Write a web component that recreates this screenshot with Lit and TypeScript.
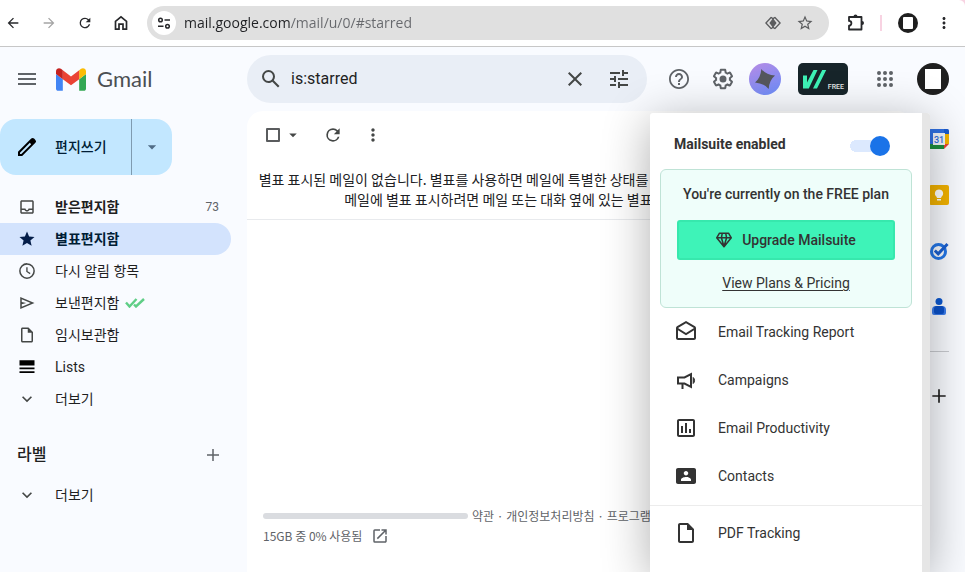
import { LitElement, html, css, nothing, TemplateResult } from "lit";
import { customElement, state } from "lit/decorators.js";
import { classMap } from "lit/directives/class-map.js";

const P = {
  back: "M20 11H7.83l5.59-5.59L12 4l-8 8 8 8 1.41-1.41L7.83 13H20v-2z",
  forward: "M12 4l-1.41 1.41L16.17 11H4v2h12.17l-5.58 5.59L12 20l8-8z",
  refresh: "M17.65 6.35A7.96 7.96 0 0 0 12 4a8 8 0 1 0 7.73 10h-2.08A6 6 0 1 1 12 6c1.66 0 3.14.69 4.22 1.78L13 11h7V4l-2.35 2.35z",
  more: "M12 8c1.1 0 2-.9 2-2s-.9-2-2-2-2 .9-2 2 .9 2 2 2zm0 2c-1.1 0-2 .9-2 2s.9 2 2 2 2-.9 2-2-.9-2-2-2zm0 6c-1.1 0-2 .9-2 2s.9 2 2 2 2-.9 2-2-.9-2-2-2z",
  starOutline: "M22 9.24l-7.19-.62L12 2 9.19 8.63 2 9.24l5.46 4.73L5.82 21 12 17.27 18.18 21l-1.63-7.03L22 9.24zM12 15.4l-3.76 2.27 1-4.28-3.32-2.88 4.38-.38L12 6.1l1.71 4.04 4.38.38-3.32 2.88 1 4.28L12 15.4z",
  menu: "M3 18h18v-2H3v2zm0-5h18v-2H3v2zm0-7v2h18V6H3z",
  search: "M20.49 19l-5.73-5.73A6.97 6.97 0 0 0 16 9.5 6.5 6.5 0 1 0 9.5 16c1.41 0 2.72-.45 3.78-1.22L19 20.49 20.49 19zM5 9.5C5 7.01 7.01 5 9.5 5S14 7.01 14 9.5 11.99 14 9.5 14 5 11.99 5 9.5z",
  close: "M19 6.41L17.59 5 12 10.59 6.41 5 5 6.41 10.59 12 5 17.59 6.41 19 12 13.41 17.59 19 19 17.59 13.41 12z",
  tune: "M3 17v2h6v-2H3zM3 5v2h10V5H3zm10 16v-2h8v-2h-8v-2h-2v6h2zM7 9v2H3v2h4v2h2V9H7zm14 4v-2H11v2h10zm-6-4h2V7h4V5h-4V3h-2v6z",
  help: "M11 18h2v-2h-2v2zm1-16C6.48 2 2 6.48 2 12s4.48 10 10 10 10-4.48 10-10S17.52 2 12 2zm0 18.200c-4.500 0-8.200-3.700-8.200-8.200S7.500 3.800 12 3.800s8.200 3.700 8.200 8.200-3.700 8.200-8.200 8.200zM12 6c-2.210 0-4 1.790-4 4h2c0-1.100.9-2 2-2s2 .9 2 2c0 2-3 1.750-3 5h2c0-2.250 3-2.500 3-5 0-2.210-1.790-4-4-4z",
  gear: "M13.850 22.250h-3.700c-.740 0-1.360-.540-1.450-1.270l-.270-1.890c-.270-.140-.530-.290-.790-.460l-1.800.720c-.700.260-1.470-.030-1.810-.650L2.200 15.530c-.350-.660-.200-1.440.360-1.880l1.530-1.190c-.010-.150-.020-.300-.020-.460 0-.150.010-.310.020-.460l-1.520-1.190c-.590-.450-.740-1.260-.370-1.880l1.850-3.190c.340-.620 1.110-.900 1.790-.630l1.810.730c.260-.170.520-.320.780-.460l.270-1.910c.090-.700.710-1.250 1.440-1.250h3.700c.740 0 1.360.540 1.450 1.270l.270 1.890c.270.140.530.290.790.460l1.800-.720c.710-.260 1.480.030 1.820.650l1.840 3.180c.360.660.200 1.440-.360 1.880l-1.520 1.190c.010.150.020.300.020.460s-.010.310-.020.460l1.520 1.190c.560.450.720 1.230.370 1.860l-1.860 3.220c-.340.620-1.110.900-1.800.630l-1.800-.720c-.260.170-.520.320-.780.460l-.270 1.910c-.100.680-.720 1.220-1.460 1.220zm-3.230-2h2.760l.370-2.550.530-.220c.440-.180.880-.440 1.340-.780l.450-.340 2.380.960 1.380-2.400-2.030-1.580.070-.560c.030-.260.060-.510.060-.780s-.030-.530-.060-.780l-.070-.560 2.030-1.580-1.390-2.400-2.390.960-.450-.350c-.420-.320-.870-.580-1.330-.770l-.520-.220-.370-2.550h-2.760l-.370 2.550-.530.210c-.440.190-.880.440-1.340.790l-.450.330-2.380-.950-1.390 2.390 2.030 1.580-.070.560a7 7 0 0 0-.060.790c0 .260.020.530.060.780l.070.560-2.030 1.580 1.380 2.400 2.390-.960.450.350c.430.330.860.580 1.330.770l.530.220.380 2.550zM12 8.500a3.500 3.500 0 1 0 0 7 3.500 3.500 0 0 0 0-7z",
  apps: "M6 8a2 2 0 1 0 0-4 2 2 0 0 0 0 4zm6 12a2 2 0 1 0 0-4 2 2 0 0 0 0 4zm-6 0a2 2 0 1 0 0-4 2 2 0 0 0 0 4zm0-6a2 2 0 1 0 0-4 2 2 0 0 0 0 4zm6 0a2 2 0 1 0 0-4 2 2 0 0 0 0 4zm4-8a2 2 0 1 0 4 0 2 2 0 0 0-4 0zm-4 2a2 2 0 1 0 0-4 2 2 0 0 0 0 4zm6 6a2 2 0 1 0 0-4 2 2 0 0 0 0 4zm0 6a2 2 0 1 0 0-4 2 2 0 0 0 0 4z",
  pencil: "M20.41 4.94l-1.35-1.35a2 2 0 0 0-2.83 0L3 16.82V21h4.18L20.41 7.77a2 2 0 0 0 0-2.83zM6.350 19H5v-1.350l9.820-9.820 1.350 1.350L6.350 19z",
  drop: "M7 10l5 5 5-5z",
  inbox: "M19 3H5c-1.100 0-2 .900-2 2v14c0 1.100.900 2 2 2h14c1.100 0 2-.900 2-2V5c0-1.100-.900-2-2-2zm0 16H5v-3h3.560c.690 1.190 1.970 2 3.450 2s2.750-.810 3.450-2H19v3zm0-5h-4.990c0 1.100-.900 2-2 2s-2-.900-2-2H5V5h14v9z",
  star: "M12 17.270L18.180 21l-1.640-7.030L22 9.240l-7.190-.610L12 2 9.190 8.630 2 9.240l5.460 4.730L5.820 21z",
  clock: "M12 1.500a10.500 10.500 0 1 0 0 21 10.500 10.500 0 0 0 0-21zm0 19a8.500 8.500 0 1 1 0-17 8.500 8.500 0 0 1 0 17zM12.800 7H11v6l4.800 3.200.9-1.500-3.900-2.500z",
  send: "M3 4v16l19-8L3 4zm2 3l11.850 5L5 17v-3.500l6-1.500-6-1.500V7z",
  file: "M14 2H6c-1.100 0-2 .900-2 2v16c0 1.100.900 2 2 2h12c1.100 0 2-.900 2-2V8l-6-6zM6 20V4h7v5h5v11H6z",
  lists: "M2 3h20v7H2zm0 9.500h20V15H2zm0 5h20V20H2z",
  chevron: "M7.410 8.590L12 13.170l4.590-4.580L18 10l-6 6-6-6z",
  plus: "M20 13h-7v7h-2v-7H4v-2h7V4h2v7h7v2z",
  open: "M19 19H5V5h7V3H5a2 2 0 0 0-2 2v14a2 2 0 0 0 2 2h14c1.100 0 2-.900 2-2v-7h-2v7zM14 3v2h3.590l-9.830 9.830 1.410 1.410L19 6.410V10h2V3h-7z",
  mail: "M21.990 8c0-.720-.370-1.350-.940-1.700L12 1 2.950 6.300C2.380 6.650 2 7.280 2 8v10c0 1.100.900 2 2 2h16c1.100 0 2-.900 2-2l-.010-10zM20 8v.010L12 13 4 8l8-4.680L20 8zM4 18v-7.660l8 5.020 8-5.010V18H4z",
  chart: "M19 3H5c-1.100 0-2 .900-2 2v14c0 1.100.900 2 2 2h14c1.100 0 2-.900 2-2V5c0-1.100-.900-2-2-2zm0 16H5V5h14v14zM7 10h2v7H7zm4-3h2v10h-2zm4 6h2v4h-2z",
  contacts: "M20 4H4c-1.110 0-2 .900-2 2v12c0 1.100.890 2 2 2h16c1.100 0 2-.900 2-2V6c0-1.100-.900-2-2-2zm-8 3c1.240 0 2.250 1.010 2.250 2.250S13.240 11.500 12 11.500 9.750 10.490 9.750 9.250 10.760 7 12 7zm5 10H7v-1.500c0-1.660 3.340-2.500 5-2.500s5 .840 5 2.500V17z",
};

const icon = (d: string, size = 20) => html`
  <svg viewBox="0 0 24 24" width=${size} height=${size} fill="currentColor" aria-hidden="true"><path d=${d}></path></svg>`;

const base = css`
  * { box-sizing: border-box; }
  svg { display: block; flex: none; }
  button, input { font: inherit; color: inherit; margin: 0; padding: 0; border: 0; background: none; }
  button { display: flex; align-items: center; justify-content: center; flex: none; cursor: pointer; }
  a { color: inherit; text-decoration: none; }
  ul { list-style: none; margin: 0; padding: 0; }
`;

@customElement("browser-bar")
class BrowserBar extends LitElement {
  static styles = [base, css`
    :host { display: block; background: #f8d3e2; }
    .bar {
      display: flex; align-items: center; height: 47px; padding: 0 12px 0 5px;
      background: #fff; border-bottom: 1px solid #c7c7c7; border-top-right-radius: 6px; color: #27282b;
    }
    .nav { display: flex; gap: 20px; }
    .dim { color: #a5a5a5; }
    .address {
      flex: 1; display: flex; align-items: center; height: 34px; margin-left: 18px; padding: 0 15px 0 5px;
      border-radius: 17px; background: #e0e0e0; color: #5b5c5e;
    }
    .site { width: 24px; height: 24px; border-radius: 50%; background: #fff; color: #27282b; }
    .url {
      flex: 1; min-width: 0; height: 24px; margin-left: 8px; outline: 0;
      font: 14px/24px "Open Sans", "Noto Sans", sans-serif;
      background: linear-gradient(90deg, #202124 107px, #66686c 107px); background-clip: text; -webkit-background-clip: text;
      color: transparent;
    }
    .acts { display: flex; align-items: center; gap: 15px; }
    .tools { display: flex; align-items: center; margin-left: 17px; }
    .sep { width: 2px; height: 16px; margin: 0 16px; background: #f8d3e2; }
    .avatar { width: 20px; height: 20px; border-radius: 50%; background: #1f1f1f; margin-right: 17px; }
    .avatar::before { content: ""; width: 10px; height: 12px; background: #fff; border-radius: 1px; }
  `];

  render() {
    return html`
      <div class="bar">
        <div class="nav">
          <button aria-label="뒤로">${icon(P.back, 16)}</button>
          <button class="dim" aria-label="앞으로">${icon(P.forward, 16)}</button>
          <button aria-label="새로고침">${icon(P.refresh, 16)}</button>
          <button aria-label="홈">
            <svg width="16" height="16" viewBox="0 0 16 16" fill="none" stroke="currentColor" stroke-width="1.700"><path d="M2.500 14.200V6.300L8 1.900l5.500 4.400v7.900H10V9.200H6v5z"></path></svg>
          </button>
        </div>
        <div class="address">
          <button class="site" aria-label="사이트 정보">
            <svg width="14" height="14" viewBox="0 0 14 14" fill="none" stroke="currentColor" stroke-width="1.500"><circle cx="3.500" cy="4" r="1.800"></circle><path d="M7.500 4H13M1 10.200h5.500"></path><circle cx="10.500" cy="10.200" r="1.800"></circle></svg>
          </button>
          <input class="url" aria-label="주소" value="mail.google.com/mail/u/0/#starred" />
          <div class="acts">
            <button aria-label="미리보기">
              <svg width="16" height="16" viewBox="0 0 16 16" fill="none" stroke="currentColor" stroke-width="1.300"><path d="M6.300 2.200L.9 8l5.400 5.800M9.700 2.200L15.100 8l-5.400 5.800M6.300 2.200l1.700 1.700 1.700-1.700M6.300 13.800L8 12.100l1.700 1.700"></path><path d="M8 4.300L10.800 8 8 11.700 5.200 8z" fill="currentColor"></path></svg>
            </button>
            <button aria-label="북마크">${icon(P.starOutline, 18)}</button>
          </div>
        </div>
        <div class="tools">
          <button aria-label="확장 프로그램">
            <svg width="18" height="18" viewBox="0 0 18 18" fill="none" stroke="currentColor" stroke-width="1.800" stroke-linejoin="round"><path d="M3 3h12.500v12.500H3v-3.800a2.400 2.400 0 0 0 0-4.800z"></path><path d="M7.500 2.500a2 2 0 0 1 4 0zM16 7a2 2 0 0 1 0 4z" fill="currentColor" stroke="none"></path></svg>
          </button>
          <span class="sep"></span>
          <button class="avatar" aria-label="프로필"></button>
          <button aria-label="메뉴">${icon(P.more, 18)}</button>
        </div>
      </div>`;
  }
}

@customElement("mail-header")
class MailHeader extends LitElement {
  static styles = [base, css`
    :host { display: flex; align-items: center; height: 64px; padding-right: 16px; color: #5f6368; }
    .brand { display: flex; align-items: center; width: 247px; flex: none; padding-left: 15px; }
    .logo { display: flex; align-items: center; gap: 11px; margin-left: 17px; color: #4c4f53; font: 22px/28px Lato, "Open Sans", sans-serif; }
    .search {
      flex: 1; min-width: 0; display: flex; align-items: center; height: 48px; padding: 0 16px 0 12px;
      border-radius: 24px; background: #e9eef6; color: #444746;
    }
    .search input { flex: 1; min-width: 0; margin-left: 8px; outline: 0; font: 16px/24px Roboto, sans-serif; color: #1f1f1f; }
    .tune { margin-left: 20px; }
    .round { width: 40px; height: 40px; }
    .icons { display: flex; align-items: center; margin-left: 12px; gap: 4px; }
    .gemini { width: 32px; height: 32px; border-radius: 50%; margin-left: 2px; background: linear-gradient(155deg, #b78be4, #6a8efb); color: #55575c; }
    .suite {
      width: 50px; height: 32px; margin: 0 13px; padding: 0 4px 0 5px; border-radius: 5px; background: #17252a; color: #e4e8e8;
      align-items: center; justify-content: space-between; font: 500 7px/10px Roboto, sans-serif;
    }
    .free { align-self: flex-end; padding-bottom: 3px; }
    .avatar { width: 32px; height: 32px; border-radius: 50%; margin-left: 8px; background: #1f1f1f; }
    .avatar::before { content: ""; width: 16px; height: 20px; background: #fff; }
  `];

  render() {
    return html`
      <div class="brand">
        <button aria-label="기본 메뉴">${icon(P.menu, 24)}</button>
        <a class="logo" href="#inbox">
          <svg width="30" height="23" viewBox="52 42 88 66" aria-hidden="true"><path fill="#4285f4" d="M58 108h14V74L52 59v43c0 3.320 2.690 6 6 6"></path><path fill="#34a853" d="M120 108h14c3.320 0 6-2.690 6-6V59l-20 15"></path><path fill="#fbbc04" d="M120 48v26l20-15v-8c0-7.420-8.470-11.650-14.400-7.200"></path><path fill="#ea4335" d="M72 74V48l24 18 24-18v26L96 92"></path><path fill="#c5221f" d="M52 51v8l20 15V48l-5.600-4.200c-5.940-4.450-14.400-.220-14.400 7.200"></path></svg>
          <span>Gmail</span>
        </a>
      </div>
      <form class="search" role="search" @submit=${(e: Event) => e.preventDefault()}>
        <button aria-label="검색">${icon(P.search, 24)}</button>
        <input aria-label="메일 검색" value="is:starred" />
        <button type="button" aria-label="검색어 지우기">${icon(P.close, 24)}</button>
        <button type="button" class="tune" aria-label="검색 옵션">${icon(P.tune, 24)}</button>
      </form>
      <div class="icons">
        <button class="round" aria-label="지원">${icon(P.help, 24)}</button>
        <button class="round" aria-label="설정">${icon(P.gear, 24)}</button>
        <button class="gemini" aria-label="Gemini">
          <svg width="22" height="22" viewBox="0 0 22 22" fill="currentColor"><path d="M7.300 1Q12 6.800 21 7.600Q15.200 12.300 14.700 21Q10 15.200 1 14.400Q6.800 9.700 7.300 1z"></path></svg>
        </button>
        <button class="suite" aria-label="Mailsuite">
          <svg width="24" height="19" viewBox="0 0 24 19" fill="#3ef3b7"><path d="M0 5.500h4v7L10.500 0h4L5.800 18.500H0zM19.200 0h4L14 18.500h-4z"></path></svg>
          <span class="free">FREE</span>
        </button>
        <button class="round" aria-label="Google 앱">${icon(P.apps, 24)}</button>
        <button class="avatar" aria-label="계정"></button>
      </div>`;
  }
}

interface Folder { label: string; icon: string; bold?: boolean; active?: boolean; count?: number; checks?: boolean; solid?: boolean; small?: boolean }

@customElement("mail-sidebar")
class MailSidebar extends LitElement {
  static styles = [base, css`
    :host { display: block; width: 247px; padding: 8px 16px 0 0; color: #1f1f1f; font: 14px/20px Roboto, "Noto Sans CJK KR", sans-serif; }
    .compose { display: flex; width: 172px; height: 56px; border-radius: 16px; background: #c2e7ff; overflow: hidden; }
    .write { flex: 1; gap: 16px; justify-content: flex-start; padding-left: 15px; font-weight: 500; color: #001d35; }
    .pen { color: #000; }
    .arrow { width: 41px; border-left: 1px solid #7f9bb0; color: #4f6c86; }
    .folders { margin-top: 16px; }
    .row { display: flex; align-items: center; gap: 18px; height: 32px; padding: 0 12px 0 17px; border-radius: 0 16px 16px 0; }
    .ico { display: flex; width: 20px; justify-content: center; color: #444746; }
    .name { display: flex; align-items: center; gap: 6px; flex: 1; }
    .bold { font-weight: 700; }
    .active { background: #d3e3fd; color: #001d35; }
    .active .ico { color: #041e49; }
    .solid .ico { color: #000; }
    .count { font-size: 12px; font-weight: 400; color: #5f6368; }
    .labels { display: flex; align-items: center; justify-content: space-between; height: 40px; margin: 20px 0 4px; padding: 0 9px 0 17px; }
    .title { margin: 0; font-size: 16px; font-weight: 500; }
    .labels button { color: #5f6368; }
  `];

  private folders: Folder[] = [
    { label: "받은편지함", icon: P.inbox, bold: true, count: 73 },
    { label: "별표편지함", icon: P.star, bold: true, active: true },
    { label: "다시 알림 항목", icon: P.clock },
    { label: "보낸편지함", icon: P.send, checks: true },
    { label: "임시보관함", icon: P.file },
    { label: "Lists", icon: P.lists, solid: true },
    { label: "더보기", icon: P.chevron, small: true },
  ];

  private row(f: Folder): TemplateResult {
    return html`<li><a href="#" class=${classMap({ row: true, bold: !!f.bold, active: !!f.active, solid: !!f.solid })}>
      <span class="ico">${icon(f.icon, f.small ? 20 : 18)}</span>
      <span class="name">${f.label}${f.checks ? html`
        <svg width="20" height="10" viewBox="0 0 20 10" fill="none" stroke="#5fce86" stroke-width="2.400" aria-hidden="true"><path d="M1 4.500l3.500 4L11.500 1M9 6.500l2 2L19 1"></path></svg>` : nothing}</span>
      ${f.count ? html`<span class="count">${f.count}</span>` : nothing}
    </a></li>`;
  }

  render() {
    return html`
      <div class="compose">
        <button class="write"><span class="pen">${icon(P.pencil, 24)}</span>편지쓰기</button>
        <button class="arrow" aria-label="편지쓰기 옵션">${icon(P.drop, 20)}</button>
      </div>
      <nav>
        <ul class="folders">${this.folders.map((f) => this.row(f))}</ul>
        <div class="labels"><h2 class="title">라벨</h2><button aria-label="새 라벨 만들기">${icon(P.plus, 18)}</button></div>
        <ul>${this.row({ label: "더보기", icon: P.chevron, small: true })}</ul>
      </nav>`;
  }
}

@customElement("mail-list")
class MailList extends LitElement {
  static styles = [base, css`
    :host { display: flex; flex-direction: column; min-width: 0; background: #fff; border-radius: 16px 16px 0 0; color: #202124; font: 14px/20px "Noto Sans CJK KR", sans-serif; }
    .toolbar { display: flex; align-items: center; height: 48px; padding-left: 19px; color: #444746; }
    .check { appearance: none; width: 14px; height: 14px; border: 2px solid #5a5c5e; border-radius: 1px; }
    .caret { margin-left: 4px; }
    .reload { margin-left: 21px; }
    .more { margin-left: 20px; }
    .empty { padding: 10px 50px 10px 0; border-bottom: 1px solid #e8eaed; text-align: center; white-space: nowrap; }
    .empty p { margin: 0; }
    .foot { display: flex; gap: 4px; margin-top: auto; padding: 0 16px 26px; font-size: 12px; color: #5f6368; }
    .quota { width: 205px; }
    .meter { height: 6px; margin: 7px 0; border-radius: 3px; background: #dadce0; }
    .used { display: flex; align-items: center; gap: 9px; }
    .terms { white-space: nowrap; }
  `];

  render() {
    return html`
      <div class="toolbar">
        <input class="check" type="checkbox" aria-label="선택" />
        <button class="caret" aria-label="선택 옵션">${icon(P.drop, 18)}</button>
        <button class="reload" aria-label="새로고침">${icon(P.refresh, 20)}</button>
        <button class="more" aria-label="더보기">${icon(P.more, 20)}</button>
      </div>
      <div class="empty">
        <p>별표 표시된 메일이 없습니다. 별표를 사용하면 메일에 특별한 상태를 부여하여 더 쉽게 찾을 수 있습니다.</p>
        <p>메일에 별표 표시하려면 메일 또는 대화 옆에 있는 별표 모양을 클릭하세요.</p>
      </div>
      <footer class="foot">
        <div class="quota">
          <div class="meter"></div>
          <a class="used" href="#storage">15GB 중 0% 사용됨 ${icon(P.open, 18)}</a>
        </div>
        <div class="terms"><a href="#terms">약관</a> · <a href="#privacy">개인정보처리방침</a> · <a href="#program">프로그램 정책</a></div>
      </footer>`;
  }
}

@customElement("side-apps")
class SideApps extends LitElement {
  static styles = [base, css`
    :host { display: flex; flex-direction: column; align-items: center; width: 52px; color: #1f1f1f; }
    .app { width: 40px; height: 56px; }
    .line { width: 20px; height: 1px; margin: 16px 0; background: #c9cbd0; }
  `];

  render() {
    return html`
      <button class="app" aria-label="캘린더">
        <svg width="20" height="20" viewBox="0 0 20 20"><path fill="#2f6fe0" d="M1.500 0H15v5H5v10H0V1.500A1.500 1.500 0 0 1 1.500 0z"></path><path fill="#1a5bd0" d="M15 0h3.500A1.500 1.500 0 0 1 20 1.500V5h-5z"></path><path fill="#f4b400" d="M15 5h5v10h-5z"></path><path fill="#1e8e3e" d="M5 15h10v5H1.500A1.500 1.500 0 0 1 0 18.500V15z"></path><path fill="#ea4335" d="M15 15h5l-5 5z"></path><path fill="#f1f3f8" d="M4 4h12v12H4z"></path><text x="10" y="13.500" text-anchor="middle" font-family="Roboto, sans-serif" font-weight="500" font-size="9" fill="#2f6fe0">31</text></svg>
      </button>
      <button class="app" aria-label="Keep">
        <svg width="20" height="20" viewBox="0 0 20 20"><rect width="20" height="20" rx="2" fill="#f2b200"></rect><path fill="#fff" d="M10 4.500a4 4 0 0 0-2.200 7.400V13h4.400v-1.100A4 4 0 0 0 10 4.500zM8 14h4v1.500H8z"></path></svg>
      </button>
      <button class="app" aria-label="Tasks">
        <svg width="20" height="20" viewBox="0 0 20 20" fill="none" stroke-width="3"><circle cx="9.500" cy="10.500" r="7" stroke="#2376e8"></circle><path d="M5.800 9.500l3.400 3.300L18.500 3" stroke="#1a5fd0"></path></svg>
      </button>
      <button class="app" aria-label="주소록">
        <svg width="20" height="20" viewBox="0 0 20 20"><circle cx="10" cy="4.500" r="3.500" fill="#0b57d0"></circle><path fill="#3b7ded" d="M7 9h6a4 4 0 0 1 4 4v3a2 2 0 0 1-2 2H5a2 2 0 0 1-2-2v-3a4 4 0 0 1 4-4z"></path><path fill="#0b50c8" d="M8 9h5a3 3 0 0 1 2 2v4a2 2 0 0 1-2 2H7a2 2 0 0 1-2-2v-3a3 3 0 0 1 3-3z"></path></svg>
      </button>
      <span class="line"></span>
      <button class="app" aria-label="부가기능 설치하기">${icon(P.plus, 20)}</button>`;
  }
}

@customElement("suite-menu")
class SuiteMenu extends LitElement {
  static styles = [base, css`
    :host {
      display: flex; width: 280px; overflow: hidden; background: #fff; border-radius: 3px 3px 0 0;
      box-shadow: 0 8px 48px rgba(0, 0, 0, 0.32); color: #333; font: 14px/20px Roboto, sans-serif;
    }
    .track { width: 8px; background: #e6e6e6; }
    .body { flex: 1; min-width: 0; }
    .head { display: flex; align-items: center; justify-content: space-between; height: 56px; padding: 6px 32px 0 24px; font-weight: 700; }
    .switch { appearance: none; display: flex; align-items: center; justify-content: flex-end; width: 40px; height: 20px; margin-top: 4px; cursor: pointer; }
    .switch { background: radial-gradient(circle at 6px 50%, #dce9fe 6px, transparent 6px) no-repeat, linear-gradient(#dce9fe, #dce9fe) 6px center / 28px 12px no-repeat; }
    .switch::before { content: ""; width: 20px; height: 20px; border-radius: 50%; background: #1a73e8; }
    .switch:not(:checked) { justify-content: flex-start; }
    .plan { display: flex; flex-direction: column; align-items: center; margin: 0 10px; padding: 14px 16px; border: 1px solid #bfe3d6; border-radius: 6px; background: #effefa; }
    .now { margin: 0; font-weight: 500; }
    .upgrade { width: 100%; height: 40px; margin: 16px 0 13px; gap: 10px; border: 2px solid #37e8ad; border-radius: 3px; background: #3ef3b8; font-weight: 500; }
    .plans { text-decoration: underline; text-underline-offset: 2px; }
    .item { display: flex; align-items: center; gap: 20px; height: 48px; padding-left: 24px; }
    .rule { height: 1px; margin: 5px 0 3px; background: #ececec; }
  `];

  @state() private enabled = true;

  private item(glyph: TemplateResult, label: string) {
    return html`<li><a class="item" href="#">${glyph}${label}</a></li>`;
  }

  render() {
    return html`
      <div class="body">
        <label class="head">Mailsuite enabled
          <input class="switch" type="checkbox" role="switch" .checked=${this.enabled} @change=${() => (this.enabled = !this.enabled)} />
        </label>
        <section class="plan">
          <p class="now">You're currently on the FREE plan</p>
          <button class="upgrade">
            <svg width="16" height="16" viewBox="0 0 16 16" fill="none" stroke="currentColor" stroke-width="1.500" stroke-linejoin="round"><path d="M3.500 1.200h9L15.300 5.800 8 14.800.7 5.800zM.7 5.800h14.600M5.400 5.800L8 14.500l2.600-8.700M5.400 5.800l.9-4.600M10.600 5.800l-.9-4.600"></path></svg>
            Upgrade Mailsuite
          </button>
          <a class="plans" href="#plans">View Plans &amp; Pricing</a>
        </section>
        <ul>
          ${this.item(icon(P.mail, 24), "Email Tracking Report")}
          ${this.item(html`<svg width="24" height="24" viewBox="0 0 24 24" fill="none" stroke="currentColor" stroke-width="2" aria-hidden="true"><path d="M4 9.500h6.500L17 6.200v12.600l-6.500-3.300H4zM8.500 15.500V21"></path><path d="M19.200 9.500a4 4 0 0 1 0 6z" fill="currentColor" stroke-width="1"></path></svg>`, "Campaigns")}
          ${this.item(icon(P.chart, 24), "Email Productivity")}
          ${this.item(icon(P.contacts, 24), "Contacts")}
        </ul>
        <div class="rule"></div>
        <ul>${this.item(icon(P.file, 24), "PDF Tracking")}</ul>
      </div>
      <div class="track"></div>`;
  }
}

@customElement("app-root")
class AppRoot extends LitElement {
  static styles = [base, css`
    :host { display: flex; flex-direction: column; min-height: 100vh; background: #f9fbff; font-family: Roboto, sans-serif; }
    .mail { position: relative; flex: 1; display: flex; flex-direction: column; overflow: hidden; }
    .columns { flex: 1; display: grid; grid-template-columns: auto minmax(0, 1fr) auto; }
    .popup { position: absolute; top: 66px; right: 35px; bottom: 0; }
  `];

  render() {
    return html`
      <browser-bar></browser-bar>
      <div class="mail">
        <mail-header></mail-header>
        <div class="columns">
          <mail-sidebar></mail-sidebar>
          <mail-list></mail-list>
          <side-apps></side-apps>
        </div>
        <suite-menu class="popup"></suite-menu>
      </div>`;
  }
}
